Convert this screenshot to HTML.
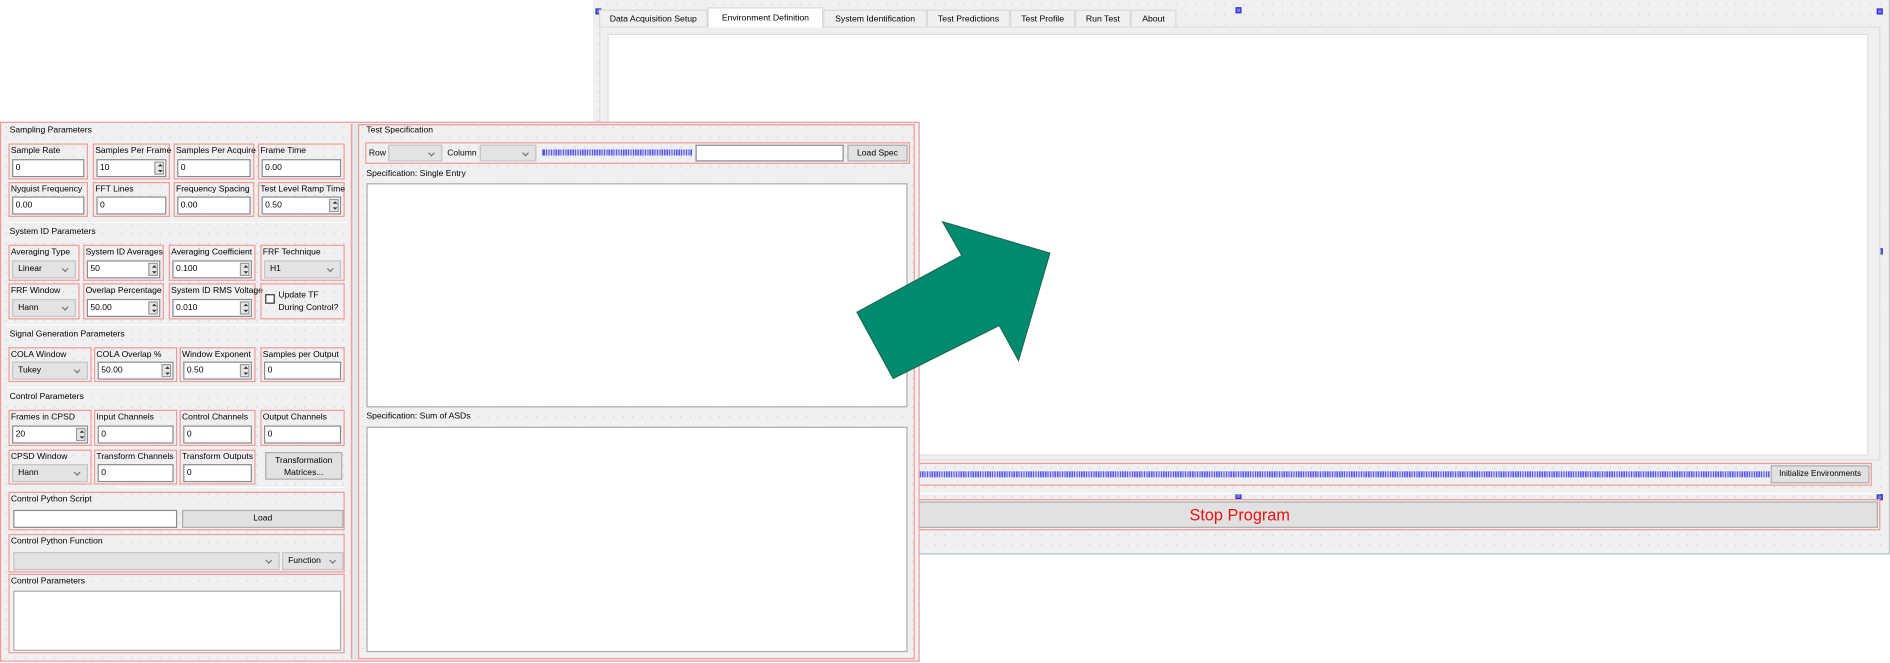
<!DOCTYPE html>
<html><head><meta charset="utf-8"><style>
*{box-sizing:border-box;margin:0;padding:0}
html,body{width:1890px;height:663px;overflow:hidden;background:#fff}
#root{position:absolute;left:0;top:0;width:1568px;height:550px;transform:scale(1.20536);transform-origin:0 0;font-family:"Liberation Sans",sans-serif;font-size:7.1px;color:#000}
.a{position:absolute}
.dots{background-color:#f0f0f0;background-image:radial-gradient(#cfcfcf 0.5px,transparent 0.7px);background-size:8px 8px}
.t{position:absolute;white-space:nowrap;line-height:9px}
.r{position:absolute;border:1px solid #f29a9a}
.r>.t{left:1px;top:1px}
.r>.i,.r>.c{position:absolute;left:2px;right:2px;bottom:1px;height:15px}
.i{background:#fff;border:1px solid #8a8a8a;padding-left:2px;line-height:13px;white-space:nowrap}
.c{background:#e3e3e3;border:1px solid #c5c5c5;padding-left:4px;line-height:13px;white-space:nowrap}
.c:after{content:"";position:absolute;right:6px;top:3.5px;width:3px;height:3px;border-right:1px solid #777;border-bottom:1px solid #777;transform:rotate(45deg)}
.sp{position:absolute;right:1px;top:1px;bottom:1px;width:8px;background:#e6e6e6;border:1px solid #9a9a9a}
.sp:before{content:"";position:absolute;left:1.5px;top:1px;border:2px solid transparent;border-bottom:2.5px solid #333;border-top:0}
.sp:after{content:"";position:absolute;left:1.5px;bottom:1px;border:2px solid transparent;border-top:2.5px solid #333;border-bottom:0}
.b{position:absolute;background:#e1e1e1;border:1px solid #adadad;text-align:center;white-space:nowrap}
.sep{position:absolute;height:1px;background:#d0d0d0;border-bottom:1px solid #fff}
.ta{position:absolute;background:#fff;border:1px solid #aaa}
.wav{position:absolute;height:5px;background:repeating-linear-gradient(90deg,#5a5ae6 0 1px,#c8c8ff 1px 2px);border-left:1px solid #3030e0;border-right:1px solid #3030e0}
.h{position:absolute;width:5px;height:5px;background:#7b7bd6;border:1px solid #2b2bd9}
.tab{position:absolute;top:8px;height:14px;background:#f0f0f0;border:1px solid #d9d9d9;border-bottom:none;text-align:center;line-height:13px;font-size:7.2px}
</style></head><body><div id="root">

<div class="a dots" style="left:492px;top:0;width:1076px;height:460px;border-right:1px solid #c9c9c9;border-bottom:1px solid #9fbfdc"></div>
<div class="h" style="left:494px;top:7px"></div>
<div class="h" style="left:1025px;top:6px"></div>
<div class="h" style="left:1557px;top:7px"></div>
<div class="h" style="left:1557px;top:206px"></div>
<div class="h" style="left:1025px;top:409px"></div>
<div class="h" style="left:1557px;top:410px"></div>
<div class="a" style="left:497px;top:22px;width:1063px;height:360px;border:1px solid #dedede;background:#f0f0f0"></div>
<div class="tab" style="left:497px;width:90px">Data Acquisition Setup</div>
<div class="tab" style="left:587px;width:96px;top:6px;height:17px;background:#fff;line-height:15px">Environment Definition</div>
<div class="tab" style="left:683px;width:86px">System Identification</div>
<div class="tab" style="left:769px;width:69px">Test Predictions</div>
<div class="tab" style="left:838px;width:54px">Test Profile</div>
<div class="tab" style="left:892px;width:46px">Run Test</div>
<div class="tab" style="left:938px;width:38px">About</div>
<div class="a" style="left:504px;top:28px;width:1046px;height:350px;background:#fff;border:1px solid #dcdcdc"></div>
<div class="r" style="left:740px;top:384px;width:813px;height:19px"></div>
<div class="wav" style="left:742px;top:391px;width:726px"></div>
<div class="b" style="left:1469px;top:386px;width:82px;height:15px;line-height:13px;font-size:6.8px">Initialize Environments</div>
<div class="sep" style="left:497px;top:409px;width:1063px"></div>
<div class="r" style="left:497px;top:414px;width:1063px;height:26px"></div>
<div class="b" style="left:499px;top:416px;width:1059px;height:22px;line-height:22px;font-size:13.5px;color:#f01010">Stop Program</div>

<div class="a dots" style="left:0;top:101px;width:763px;height:448px;border:1px solid #f29a9a"></div>
<div class="a" style="left:2px;top:103px;width:290px;height:444px;border-right:1px solid #f29a9a"></div>
<div class="a" style="left:292px;top:103px;width:5px;height:444px;background:#e8e8e8;border-left:1px solid #d8d8d8"></div>
<div class="a" style="left:297px;top:103px;width:462px;height:444px;border:1px solid #f29a9a"></div>

<div class="t" style="left:8px;top:104px">Sampling Parameters</div>
<div class="r" style="left:7px;top:119px;width:66px;height:30px"><span class="t">Sample Rate</span><div class="i">0</div></div>
<div class="r" style="left:77px;top:119px;width:64px;height:30px"><span class="t">Samples Per Frame</span><div class="i">10<i class="sp"></i></div></div>
<div class="r" style="left:144px;top:119px;width:67px;height:30px"><span class="t">Samples Per Acquire</span><div class="i">0</div></div>
<div class="r" style="left:214px;top:119px;width:72px;height:30px"><span class="t">Frame Time</span><div class="i">0.00</div></div>
<div class="r" style="left:7px;top:151px;width:66px;height:29px"><span class="t">Nyquist Frequency</span><div class="i">0.00</div></div>
<div class="r" style="left:77px;top:151px;width:64px;height:29px"><span class="t">FFT Lines</span><div class="i">0</div></div>
<div class="r" style="left:144px;top:151px;width:67px;height:29px"><span class="t">Frequency Spacing</span><div class="i">0.00</div></div>
<div class="r" style="left:214px;top:151px;width:72px;height:29px"><span class="t">Test Level Ramp Time</span><div class="i">0.50<i class="sp"></i></div></div>
<div class="sep" style="left:5px;top:184px;width:283px"></div>

<div class="t" style="left:8px;top:188px">System ID Parameters</div>
<div class="r" style="left:7px;top:203px;width:59px;height:30px"><span class="t">Averaging Type</span><div class="c">Linear</div></div>
<div class="r" style="left:69px;top:203px;width:67px;height:30px"><span class="t">System ID Averages</span><div class="i">50<i class="sp"></i></div></div>
<div class="r" style="left:140px;top:203px;width:72px;height:30px"><span class="t">Averaging Coefficient</span><div class="i">0.100<i class="sp"></i></div></div>
<div class="r" style="left:216px;top:203px;width:70px;height:30px"><span class="t">FRF Technique</span><div class="c">H1</div></div>
<div class="r" style="left:7px;top:235px;width:59px;height:30px"><span class="t">FRF Window</span><div class="c">Hann</div></div>
<div class="r" style="left:69px;top:235px;width:67px;height:30px"><span class="t">Overlap Percentage</span><div class="i">50.00<i class="sp"></i></div></div>
<div class="r" style="left:140px;top:235px;width:72px;height:30px"><span class="t">System ID RMS Voltage</span><div class="i">0.010<i class="sp"></i></div></div>
<div class="r" style="left:216px;top:235px;width:70px;height:30px"><div class="a" style="left:3px;top:8px;width:8px;height:8px;background:#fff;border:1px solid #333"></div><span class="t" style="left:14px;top:4px;line-height:10px">Update TF<br>During Control?</span></div>
<div class="sep" style="left:5px;top:269px;width:283px"></div>

<div class="t" style="left:8px;top:273px">Signal Generation Parameters</div>
<div class="r" style="left:7px;top:288px;width:69px;height:29px"><span class="t">COLA Window</span><div class="c">Tukey</div></div>
<div class="r" style="left:78px;top:288px;width:69px;height:29px"><span class="t">COLA Overlap %</span><div class="i">50.00<i class="sp"></i></div></div>
<div class="r" style="left:149px;top:288px;width:63px;height:29px"><span class="t">Window Exponent</span><div class="i">0.50<i class="sp"></i></div></div>
<div class="r" style="left:216px;top:288px;width:70px;height:29px"><span class="t">Samples per Output</span><div class="i">0</div></div>
<div class="sep" style="left:5px;top:321px;width:283px"></div>

<div class="t" style="left:8px;top:325px">Control Parameters</div>
<div class="r" style="left:7px;top:340px;width:69px;height:30px"><span class="t">Frames in CPSD</span><div class="i">20<i class="sp"></i></div></div>
<div class="r" style="left:78px;top:340px;width:69px;height:30px"><span class="t">Input Channels</span><div class="i">0</div></div>
<div class="r" style="left:149px;top:340px;width:63px;height:30px"><span class="t">Control Channels</span><div class="i">0</div></div>
<div class="r" style="left:216px;top:340px;width:70px;height:30px"><span class="t">Output Channels</span><div class="i">0</div></div>
<div class="r" style="left:7px;top:373px;width:69px;height:29px"><span class="t">CPSD Window</span><div class="c">Hann</div></div>
<div class="r" style="left:78px;top:373px;width:69px;height:29px"><span class="t">Transform Channels</span><div class="i">0</div></div>
<div class="r" style="left:149px;top:373px;width:63px;height:29px"><span class="t">Transform Outputs</span><div class="i">0</div></div>
<div class="b" style="left:220px;top:375px;width:64px;height:23px;line-height:10px;padding-top:1px">Transformation<br>Matrices...</div>
<div class="sep" style="left:97px;top:404px;width:189px"></div>

<div class="r" style="left:7px;top:408px;width:279px;height:32px"><span class="t">Control Python Script</span><div class="i" style="position:absolute;left:3px;top:14px;width:136px;height:15px"></div><div class="b" style="left:143px;top:14px;width:134px;height:15px;line-height:13px">Load</div></div>
<div class="r" style="left:7px;top:443px;width:279px;height:32px"><span class="t">Control Python Function</span><div class="c" style="position:absolute;left:3px;top:14px;width:221px;height:15px"></div><div class="c" style="position:absolute;left:226px;top:14px;width:51px;height:15px">Function</div></div>
<div class="r" style="left:7px;top:476px;width:279px;height:66px"><span class="t">Control Parameters</span><div class="ta" style="left:3px;top:13px;width:272px;height:50px"></div></div>

<div class="t" style="left:304px;top:104px">Test Specification</div>
<div class="r" style="left:303px;top:118px;width:452px;height:18px"></div>
<div class="t" style="left:306px;top:123px">Row</div>
<div class="c" style="position:absolute;left:322px;top:120px;width:45px;height:14px"></div>
<div class="t" style="left:371px;top:123px">Column</div>
<div class="c" style="position:absolute;left:398px;top:120px;width:47px;height:14px"></div>
<div class="wav" style="left:450px;top:124px;width:124px"></div>
<div class="i" style="position:absolute;left:577px;top:120px;width:123px;height:14px"></div>
<div class="b" style="left:703px;top:120px;width:50px;height:14px;line-height:12px">Load Spec</div>
<div class="t" style="left:304px;top:140px">Specification: Single Entry</div>
<div class="ta" style="left:304px;top:152px;width:449px;height:186px"></div>
<div class="t" style="left:304px;top:341px">Specification: Sum of ASDs</div>
<div class="ta" style="left:304px;top:354px;width:449px;height:187px"></div>

<svg class="a" style="left:0;top:0" width="1568" height="550" viewBox="0 0 1568 550">
<polygon points="782,184 871,210 845,299 829,270 741,314 711,259 798,212" fill="#008b6f" stroke="#1d6a55" stroke-width="1"/>
</svg>
</div></body></html>
